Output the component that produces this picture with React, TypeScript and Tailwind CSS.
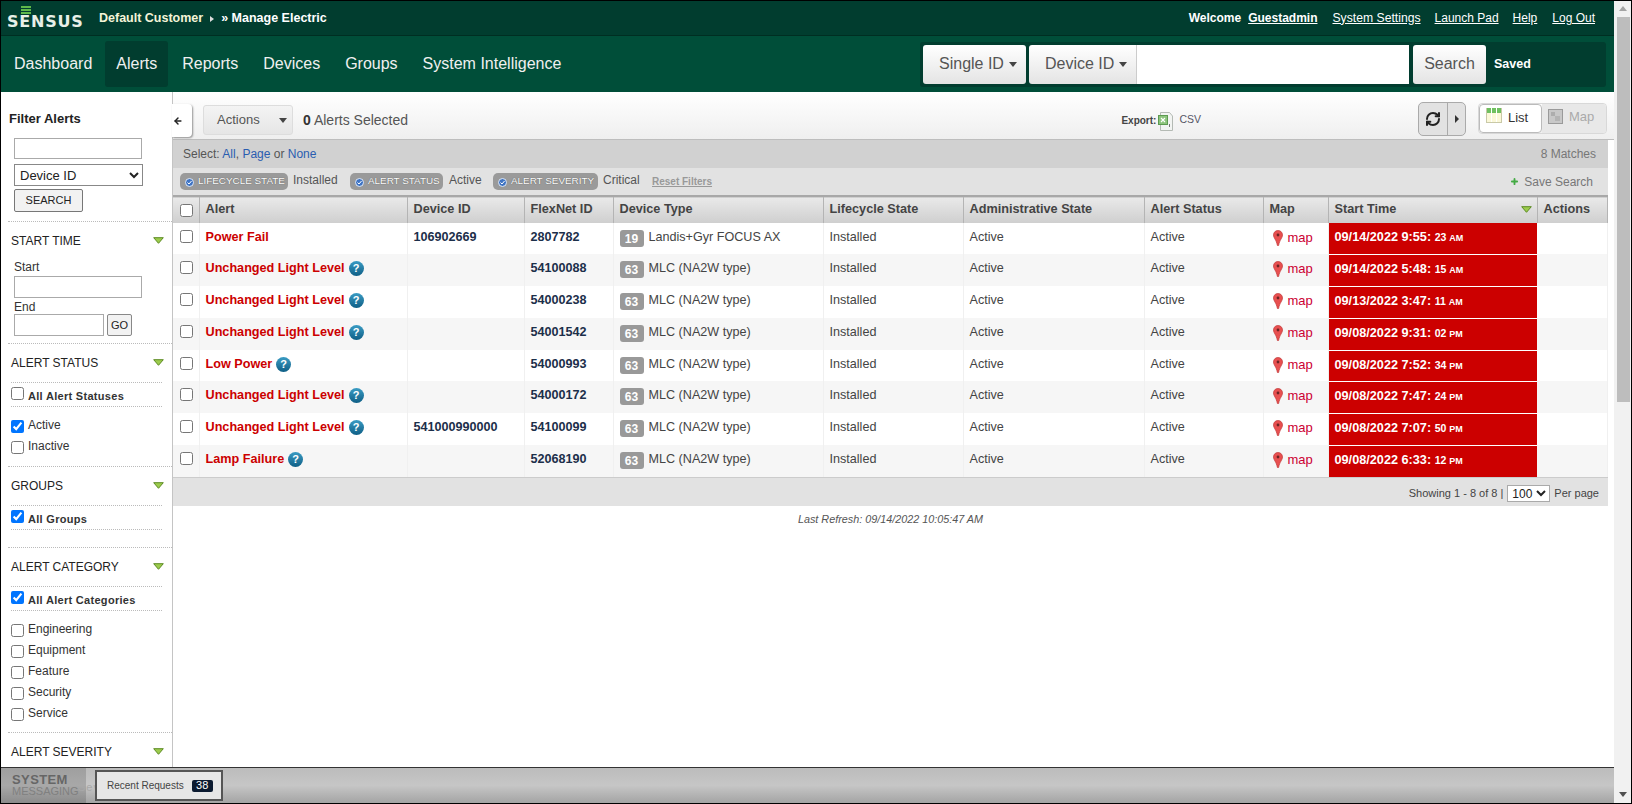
import React from "react";
import { ArrowLeft, RefreshCw, Plus } from "lucide-react";

const Tri = ({ className = "" }: { className?: string }) => (
  <svg width="11" height="7" viewBox="0 0 11 7" className={className}>
    <path d="M0.7 0.7H10.3L5.5 6.3Z" fill="#9ccc4c" stroke="#5c8a22" strokeWidth="1" />
  </svg>
);

const Dotted = ({ className = "ml-[7px]" }: { className?: string }) => (
  <div className={`h-px border-t border-dotted border-[#bbbbbb] ${className}`} />
);

const Head = ({ children }: { children: React.ReactNode }) => (
  <div className="flex h-[37px] items-center justify-between pl-[10px] pr-[8px] text-[12px] text-[#222222]">
    <span>{children}</span>
    <Tri />
  </div>
);

const Check = ({ label, checked = false }: { label: string; checked?: boolean }) => (
  <label className="flex h-[21px] items-start gap-[4px] pl-[10px] text-[12px] leading-[12px] text-[#333333]">
    <input type="checkbox" defaultChecked={checked} className="m-0 mt-px" />
    <span>{label}</span>
  </label>
);

const AllRow = ({ label, checked = false }: { label: string; checked?: boolean }) => (
  <>
    <Dotted className="mx-[10px] mt-px" />
    <label className="flex h-[23px] items-start gap-[4px] pl-[10px] pt-[4px]">
      <input type="checkbox" defaultChecked={checked} className="m-0" />
      <span className="mt-[2px] text-[11px] font-bold leading-[14px] tracking-[0.3px] text-[#333333]">{label}</span>
    </label>
    <Dotted className="mx-[10px]" />
  </>
);

const Sidebar = () => (
  <aside className="h-full w-[172px] shrink-0 overflow-hidden border-r border-[#c4c4c4] bg-white">
    <div className="pl-[8px] pt-[19px] text-[13px] font-bold leading-[16px] text-[#222222]">Filter Alerts</div>
    <input className="ml-[13px] mt-[11px] block h-[21px] w-[128px] border border-[#aaaaaa] bg-white" />
    <select defaultValue="Device ID" className="ml-[13px] mt-[5px] block h-[22px] w-[129px] border border-[#888888] bg-white pl-[1px] text-[13px] text-[#222222]">
      <option>Device ID</option>
    </select>
    <button className="ml-[13px] mt-[3px] block h-[23px] w-[69px] rounded-[2px] border border-[#777777] bg-[#f2f2f2] text-[11px] text-[#222222]">SEARCH</button>
    <Dotted className="ml-[7px] mt-[9px]" />
    <Head>START TIME</Head>
    <div className="pl-[13px] text-[12px] leading-[16px] text-[#333333]">Start</div>
    <input className="ml-[13px] mt-px block h-[22px] w-[128px] border border-[#aaaaaa] bg-white" />
    <div className="mt-px h-[15px] pl-[13px] text-[12px] leading-[16px] text-[#333333]">End</div>
    <div className="flex gap-[3px] pl-[13px]">
      <input className="h-[22px] w-[90px] border border-[#aaaaaa] bg-white" />
      <button className="h-[22px] w-[25px] rounded-[2px] border border-[#888888] bg-[#f2f2f2] text-[11px] text-[#222222]">GO</button>
    </div>
    <Dotted className="ml-[7px] mt-[7px]" />
    <Head>ALERT STATUS</Head>
    <AllRow label="All Alert Statuses" />
    <div className="pt-[12px]">
      <Check label="Active" checked />
      <Check label="Inactive" />
    </div>
    <Dotted className="ml-[7px] mt-[5px]" />
    <Head>GROUPS</Head>
    <AllRow label="All Groups" checked />
    <Dotted className="ml-[7px] mt-[17px]" />
    <Head>ALERT CATEGORY</Head>
    <AllRow label="All Alert Categories" checked />
    <div className="pt-[12px]">
      <Check label="Engineering" />
      <Check label="Equipment" />
      <Check label="Feature" />
      <Check label="Security" />
      <Check label="Service" />
    </div>
    <Dotted className="ml-[7px] mt-[4px]" />
    <Head>ALERT SEVERITY</Head>
  </aside>
);

const Pin = () => (
  <svg width="10" height="16" viewBox="0 0 10 16" className="shrink-0">
    <path d="M5 0.5C7.6 0.5 9.5 2.4 9.5 5C9.5 8 6.7 9.6 5.6 15.5H4.4C3.3 9.6 0.5 8 0.5 5C0.5 2.4 2.4 0.5 5 0.5Z" fill="#e85050" stroke="#c03838" strokeWidth="0.7" />
    <circle cx="5" cy="5" r="1.4" fill="#6a2424" />
  </svg>
);

const Help = () => (
  <span className="ml-[3px] inline-flex h-[15px] w-[15px] shrink-0 items-center justify-center rounded-full bg-gradient-to-b from-[#3a9cc4] to-[#0e5f86] text-[11px] font-bold leading-none text-white">?</span>
);

type Row = {
  alert: string;
  help: boolean;
  device: string;
  flex: string;
  code: string;
  type: string;
  date: string;
  secs: string;
  ap: string;
  h: string;
};

const rows: Row[] = [
  { alert: "Power Fail", help: false, device: "106902669", flex: "2807782", code: "19", type: "Landis+Gyr FOCUS AX", date: "09/14/2022 9:55:", secs: "23", ap: "AM", h: "h-[31px]" },
  { alert: "Unchanged Light Level", help: true, device: "", flex: "54100088", code: "63", type: "MLC (NA2W type)", date: "09/14/2022 5:48:", secs: "15", ap: "AM", h: "h-[32px]" },
  { alert: "Unchanged Light Level", help: true, device: "", flex: "54000238", code: "63", type: "MLC (NA2W type)", date: "09/13/2022 3:47:", secs: "11", ap: "AM", h: "h-[32px]" },
  { alert: "Unchanged Light Level", help: true, device: "", flex: "54001542", code: "63", type: "MLC (NA2W type)", date: "09/08/2022 9:31:", secs: "02", ap: "PM", h: "h-[32px]" },
  { alert: "Low Power", help: true, device: "", flex: "54000993", code: "63", type: "MLC (NA2W type)", date: "09/08/2022 7:52:", secs: "34", ap: "PM", h: "h-[31px]" },
  { alert: "Unchanged Light Level", help: true, device: "", flex: "54000172", code: "63", type: "MLC (NA2W type)", date: "09/08/2022 7:47:", secs: "24", ap: "PM", h: "h-[32px]" },
  { alert: "Unchanged Light Level", help: true, device: "541000990000", flex: "54100099", code: "63", type: "MLC (NA2W type)", date: "09/08/2022 7:07:", secs: "50", ap: "PM", h: "h-[32px]" },
  { alert: "Lamp Failure", help: true, device: "", flex: "52068190", code: "63", type: "MLC (NA2W type)", date: "09/08/2022 6:33:", secs: "12", ap: "PM", h: "h-[32px]" },
];

const Th = ({ children, w }: { children?: React.ReactNode; w: string }) => (
  <th className={`${w} border-r border-[#b4b4b4] p-0 pl-[6px] text-left text-[12.7px] font-bold text-[#444444]`}>{children}</th>
);

const td = "border-r border-[#f0f0f0] p-0 pl-[6px] pt-[6px] align-top text-[12.6px] leading-[16px] text-[#444444]";

const Table = () => (
  <table className="w-[1434px] table-fixed border-collapse">
    <thead>
      <tr className="h-[27px] border-t-2 border-[#a8a8a8] bg-gradient-to-b from-[#e9e9e9] to-[#cfcfcf]">
        <th className="w-[26px] border-r border-[#b4b4b4] p-0 pl-[7px] text-left">
          <input type="checkbox" className="m-0 block" />
        </th>
        <Th w="w-[208px]">Alert</Th>
        <Th w="w-[117px]">Device ID</Th>
        <Th w="w-[89px]">FlexNet ID</Th>
        <Th w="w-[210px]">Device Type</Th>
        <Th w="w-[140px]">Lifecycle State</Th>
        <Th w="w-[181px]">Administrative State</Th>
        <Th w="w-[119px]">Alert Status</Th>
        <Th w="w-[65px]">Map</Th>
        <Th w="w-[209px]">
          <span className="flex items-center justify-between pr-[5px]">Start Time<Tri /></span>
        </Th>
        <Th w="w-[70px]">Actions</Th>
      </tr>
    </thead>
    <tbody>
      {rows.map((r, i) => (
        <tr key={i} className={`${r.h} ${i % 2 ? "bg-[#f6f6f6]" : "bg-white"}`}>
          <td className="border-r border-[#f0f0f0] p-0 pl-[7px] pt-[7px] align-top">
            <input type="checkbox" className="m-0 block" />
          </td>
          <td className="border-r border-[#f0f0f0] p-0 pl-[6px] pt-[6px] align-top">
            <span className="flex items-start text-[12.65px] font-bold leading-[16px] text-[#cc0000]">
              {r.alert}
              {r.help && <span className="ml-[1px] mt-[1px] inline-flex"><Help /></span>}
            </span>
          </td>
          <td className={`${td} !text-[12.6px] font-bold !text-[#1c2f4a]`}>{r.device}</td>
          <td className={`${td} !text-[12.6px] font-bold !text-[#1c2f4a]`}>{r.flex}</td>
          <td className={td}>
            <span className="flex items-start">
              <span className="mt-[1px] flex h-[17px] w-[24px] items-center justify-center rounded-[3px] bg-[#999999] text-[12px] font-bold text-white">{r.code}</span>
              <span className="ml-[5px]">{r.type}</span>
            </span>
          </td>
          <td className={td}>Installed</td>
          <td className={td}>Active</td>
          <td className={td}>Active</td>
          <td className="border-r border-[#f0f0f0] p-0 pl-[9px] pt-[7px] align-top">
            <span className="flex items-start gap-[5px] text-[13px] leading-[16px] text-[#cc0033]">
              <Pin />
              map
            </span>
          </td>
          <td className="border-b border-white bg-[#cc0000] p-0 pl-[6px] pt-[6px] align-top text-[12.7px] font-bold leading-[16px] text-white">
            {r.date} <span className="text-[10.5px]">{r.secs} <span className="text-[9px]">{r.ap}</span></span>
          </td>
          <td className="border-r border-[#f0f0f0] p-0" />
        </tr>
      ))}
    </tbody>
  </table>
);

const Pill = ({ label, w }: { label: string; w: string }) => (
  <span className={`${w} flex h-[17px] items-center gap-[4px] rounded-[5px] bg-[#9a9a9a] pl-[5px] text-[9.9px] text-white [text-shadow:0_0_1px_#444444]`}>
    <svg width="9" height="9" viewBox="0 0 9 9" className="mt-[2px] shrink-0">
      <circle cx="4.5" cy="4.5" r="4" fill="#3f74c4" stroke="#dfe8f5" />
      <path d="M2.5 4.5L4 6L6.5 3" fill="none" stroke="#ffffff" strokeWidth="1" />
    </svg>
    {label}
  </span>
);

const Excel = () => (
  <svg width="16" height="21" viewBox="0 0 16 21">
    <path d="M2.5 1.5H11.5L14.5 5V19.5H2.5Z" fill="#f2f4f2" stroke="#b4bab4" />
    <rect x="0.5" y="4.5" width="9" height="9" fill="#8cc47c" stroke="#5c9a50" />
    <path d="M3 7L7 11M7 7L3 11" stroke="#ffffff" strokeWidth="1.1" />
    <path d="M11.5 13V16" stroke="#777777" strokeWidth="1" />
  </svg>
);

const ListIcon = () => (
  <svg width="16" height="15" viewBox="0 0 16 15" className="-mt-[2px] shrink-0">
    <rect x="0" y="0" width="16" height="15" fill="#fbf8d8" />
    <rect x="0" y="0" width="16" height="5" fill="#6fc060" />
    <path d="M5.5 0V15M10.5 0V15" stroke="#ffffff" strokeWidth="1" />
    <path d="M0.5 0V15M15.5 0V15M0 14.5H16" stroke="#c9c9a8" strokeWidth="1" />
  </svg>
);

const MapIcon = () => (
  <svg width="15" height="15" viewBox="0 0 15 15" className="shrink-0">
    <rect x="0.5" y="0.5" width="14" height="14" fill="#c8c8c8" stroke="#9a9a9a" />
    <rect x="3" y="3" width="4" height="4" fill="#adadad" />
    <rect x="7" y="7" width="5" height="5" fill="#b4b4b4" />
  </svg>
);

const Toolbar = () => (
  <div className="flex h-[48px] shrink-0 items-center border-b border-[#bdbdbd] bg-gradient-to-b from-white to-[#efefef] pl-[30px] pr-[7px] pt-[9px]">
    <button className="flex h-[30px] w-[90px] items-center rounded-[3px] border border-[#dddddd] bg-gradient-to-b from-[#f4f4f4] to-[#e6e6e6] pl-[13px] text-[13px] text-[#555555]">
      Actions
      <span className="ml-[19px] h-0 w-0 border-x-[4px] border-t-[5px] border-x-transparent border-t-[#444444]" />
    </button>
    <span className="ml-[10px] text-[14px] text-[#555555]"><b className="text-[#333333]">0</b> Alerts Selected</span>
    <div className="flex-1" />
    <span className="text-[10px] font-bold text-[#444444]">Export:</span>
    <span className="ml-[2px] mt-[3px]"><Excel /></span>
    <span className="ml-[5px] text-[10.5px] text-[#555566]">CSV</span>
    <div className="w-[217px]" />
    <div className="-mt-[3px] mr-[12px] flex h-[34px] w-[48px] overflow-hidden rounded-[5px] border border-[#aaaaaa] bg-[#e2e2e2]">
      <span className="flex w-[29px] items-center justify-center border-r border-[#aaaaaa]"><RefreshCw size={16} strokeWidth={3} color="#222222" /></span>
      <span className="flex flex-1 items-center justify-center"><span className="h-0 w-0 border-y-[4px] border-l-[4px] border-y-transparent border-l-[#333333]" /></span>
    </div>
    <div className="-mt-[4px] flex h-[31px] w-[129px] overflow-hidden rounded-[4px] border border-[#d8d8d8]">
      <span className="flex w-[63px] items-start gap-[6px] rounded-[4px] border border-[#bbbbbb] bg-white pl-[6px] pt-[5px] text-[13px] leading-[15px] text-[#333333]"><ListIcon />List</span>
      <span className="flex flex-1 items-start gap-[6px] bg-[#e8e8e8] pl-[6px] pt-[5px] text-[13px] leading-[15px] text-[#aaaaaa]"><MapIcon />Map</span>
    </div>
  </div>
);

const Content = () => (
  <section className="relative flex h-full min-w-0 flex-1 flex-col bg-white">
    <button className="absolute left-[-1px] top-[12px] z-10 flex h-[33px] w-[20px] items-center rounded-r-[4px] bg-white pl-[1px] shadow-[1px_1px_2px_rgba(0,0,0,0.4)]">
      <ArrowLeft size={10} strokeWidth={3.5} color="#222222" />
    </button>
    <Toolbar />
    <div className="w-[1435px]">
      <div className="flex h-[28px] items-center justify-between bg-[#d1d1d1] pl-[10px] pr-[12px] text-[12px] text-[#555555]">
        <span>Select: <span className="text-[#2a5db0]">All</span>, <span className="text-[#2a5db0]">Page</span> or <span className="text-[#2a5db0]">None</span></span>
        <span className="text-[#777777]">8 Matches</span>
      </div>
      <div className="flex h-[27px] items-center bg-[#e2e2e2] pl-[7px] pr-[15px] text-[12px] text-[#555555]">
        <Pill label="LIFECYCLE STATE" w="w-[108px]" />
        <span className="-mt-[3px] ml-[5px] w-[57px]">Installed</span>
        <Pill label="ALERT STATUS" w="w-[93px]" />
        <span className="-mt-[3px] ml-[6px] w-[44px]">Active</span>
        <Pill label="ALERT SEVERITY" w="w-[105px]" />
        <span className="-mt-[3px] ml-[5px] w-[49px]">Critical</span>
        <span className="-mt-[1px] text-[10px] font-bold text-[#999999] underline">Reset Filters</span>
        <span className="ml-auto flex items-center gap-[5px] text-[#777777]">
          <Plus size={9} strokeWidth={5} color="#44aa44" />
          Save Search
        </span>
      </div>
      <Table />
      <div className="-mt-px flex h-[29px] items-center justify-end border-t border-[#cccccc] bg-[#e2e2e2] pr-[9px] pt-[4px] text-[11px] text-[#444444]">
        <span>Showing 1 - 8 of 8 |</span>
        <select defaultValue="100" className="ml-[4px] h-[17px] w-[43px] border border-[#aaaaaa] bg-white text-[12px] text-[#222222]">
          <option>100</option>
        </select>
        <span className="ml-[4px]">Per page</span>
      </div>
      <div className="pt-[5px] text-center text-[10.8px] italic leading-[16px] text-[#555555]">Last Refresh: 09/14/2022 10:05:47 AM</div>
    </div>
  </section>
);

const Scrollbar = () => (
  <div className="flex h-full w-[17px] shrink-0 flex-col items-center bg-[#f1f1f1]">
    <div className="mt-[5px] h-0 w-0 border-x-[4px] border-b-[5px] border-x-transparent border-b-[#a3a3a3]" />
    <div className="ml-[1px] mt-[6px] h-[385px] w-[13px] bg-[#bdbdbd]" />
    <div className="mb-[6px] mt-auto h-0 w-0 border-x-[4px] border-t-[5px] border-x-transparent border-t-[#505050]" />
  </div>
);

const BottomBar = () => (
  <div className="relative flex h-[36px] shrink-0 border-t border-[#333333] bg-gradient-to-b from-[#bcbcbc] via-[#c6c6c6] to-[#a4a4a4]">
    <div className="flex w-[85px] flex-col bg-[#000000]/15 pl-[11px] pt-[6px] text-[#666666]">
      <span className="text-[13px] font-bold leading-[12px] tracking-[0.4px]">SYSTEM</span>
      <span className="text-[11px] leading-[10px] text-[#808080]">MESSAGING</span>
    </div>
    <span className="absolute left-[77px] top-[11px] text-[11px] tracking-[1px] text-[#a8a8a8]">Sev</span>
    <div className="relative ml-[9px] mt-[2px] flex h-[31px] w-[128px] items-center border-2 border-[#555555] bg-[#e6e6e6] pl-[10px] text-[10px] text-[#444444]">
      Recent Requests
      <span className="ml-[8px] flex h-[12px] w-[21px] items-center justify-center rounded-[2px] bg-[#0b1a30] text-[11px] text-white">38</span>
    </div>
  </div>
);

const Logo = () => (
  <div className="relative ml-[6px] h-full w-[84px] shrink-0">
    <div className="absolute left-[14px] top-[5px] flex w-[10px] flex-col gap-px">
      <span className="h-[2px] bg-[#5fb84a]" />
      <span className="h-[2px] bg-[#5fb84a]" />
      <span className="h-[2px] bg-[#5fb84a]" />
    </div>
    <span className="absolute left-0 top-[11px] font-['DejaVu_Sans'] text-[16px] font-bold leading-[20px] tracking-[0.8px] text-[#e8f0e8]">SENSUS</span>
  </div>
);

const TopBar = () => (
  <div className="flex h-[35px] shrink-0 items-center border-b border-[#002e22] bg-[#013d2f] text-[12px] font-bold text-white">
    <Logo />
    <span className="ml-[8px] mt-px text-[12.5px] text-[#f4f4d8]">Default Customer</span>
    <span className="ml-[7px] mt-px h-0 w-0 border-y-[3.5px] border-l-[4px] border-y-transparent border-l-[#dddddd]" />
    <span className="ml-[7px] mt-px text-[12.5px]">» Manage Electric</span>
    <div className="flex-1" />
    <span>Welcome</span>
    <span className="ml-[7px] underline">Guestadmin</span>
    <span className="ml-[15px] text-[12.2px] font-normal underline">System Settings</span>
    <span className="ml-[14px] font-normal underline">Launch Pad</span>
    <span className="ml-[14px] font-normal underline">Help</span>
    <span className="ml-[15px] mr-[19px] font-normal underline">Log Out</span>
  </div>
);

const NavSelect = ({ label, w, className = "" }: { label: string; w: string; className?: string }) => (
  <button className={`${w} flex h-[39px] items-center justify-between rounded-[3px] bg-gradient-to-b from-white to-[#e4e4e4] pl-[16px] pr-[9px] text-[16px] text-[#555555] ${className}`}>
    {label}
    <span className="h-0 w-0 border-x-[4px] border-t-[5px] border-x-transparent border-t-[#444444]" />
  </button>
);

const Nav = () => (
  <div className="flex h-[56px] shrink-0 items-center bg-[#004e39] pl-[2px] text-[16px] text-[#f0f0f0]">
    <div className="flex gap-[3px]">
      {["Dashboard", "Alerts", "Reports", "Devices", "Groups", "System Intelligence"].map((n) => (
        <span key={n} className={`flex h-[46px] items-center rounded-[3px] px-[11px] ${n === "Alerts" ? "bg-[#013d2f]" : ""} ${n === "Dashboard" ? "-mr-px" : ""}`}>{n}</span>
      ))}
    </div>
    <div className="ml-auto mr-[8px] flex h-[45px] w-[686px] items-center rounded-[3px] bg-[#013d2f] pl-[3px]">
      <NavSelect label="Single ID" w="w-[103px]" />
      <NavSelect label="Device ID" w="ml-[3px] w-[108px]" className="rounded-r-none border-r border-[#cccccc]" />
      <input className="h-[39px] w-[272px] bg-white" />
      <button className="ml-[4px] h-[39px] w-[73px] rounded-[3px] bg-gradient-to-b from-white to-[#e4e4e4] text-[16px] text-[#555555]">Search</button>
      <span className="ml-[8px] text-[12.5px] font-bold text-white">Saved</span>
    </div>
  </div>
);

export default function App() {
  return (
    <div className="flex h-[804px] w-[1632px] overflow-hidden border border-black bg-white font-['Liberation_Sans',Arial,sans-serif]">
      <div className="flex h-full w-[1613px] shrink-0 flex-col">
        <TopBar />
        <Nav />
        <div className="flex min-h-0 flex-1">
          <Sidebar />
          <Content />
        </div>
        <BottomBar />
      </div>
      <Scrollbar />
    </div>
  );
}
